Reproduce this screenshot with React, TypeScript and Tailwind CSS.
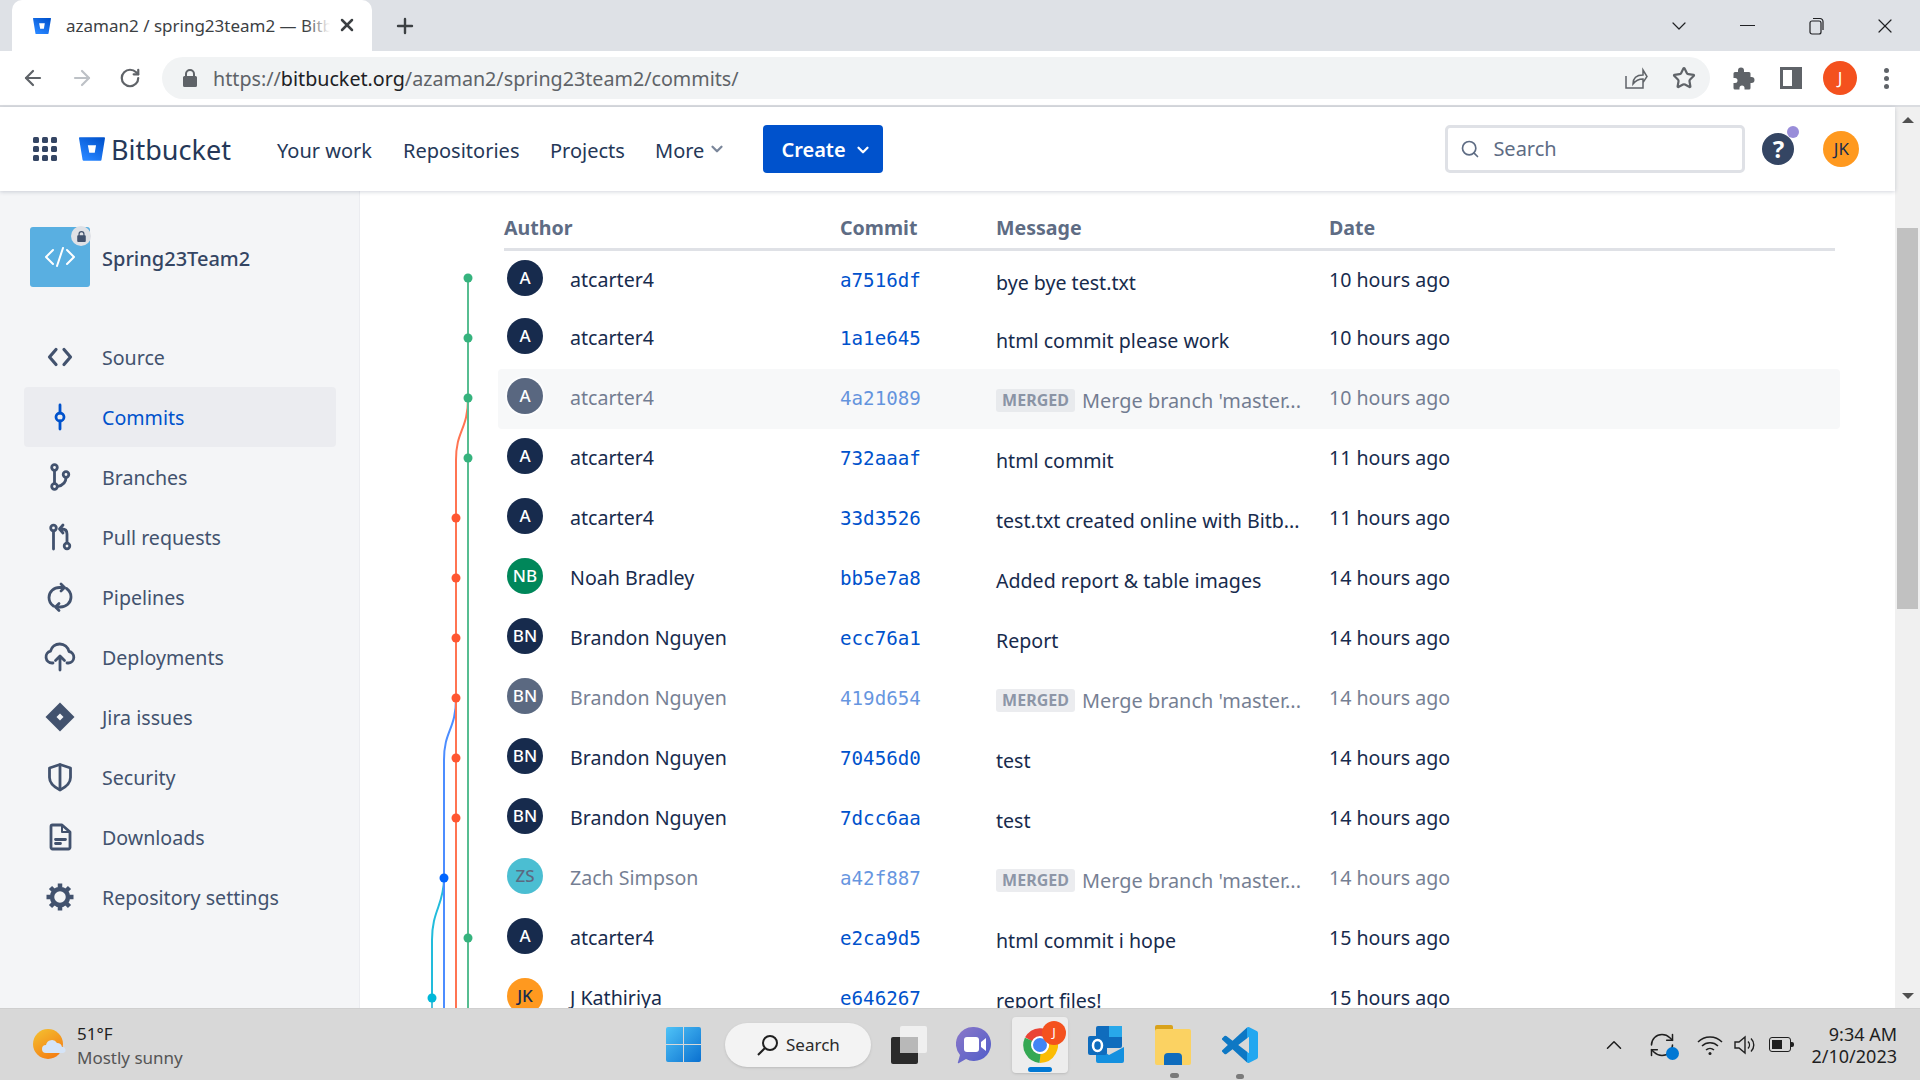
import { ArrowLeft, ArrowRight, ChevronDown, ChevronUp, Plus, RefreshCw, RotateCw, Search, Star, X } from 'lucide-react';
import type { ReactNode } from 'react';

const FONT = "font-['Noto_Sans','Open_Sans',sans-serif]";

interface Commit {
  author: string;
  initials: string;
  hash: string;
  message: string;
  date: string;
  merged?: boolean;
  hover?: boolean;
  avatar?: string;
}

const COMMITS: Commit[] = [
  { author: 'atcarter4', initials: 'A', hash: 'a7516df', message: 'bye bye test.txt', date: '10 hours ago' },
  { author: 'atcarter4', initials: 'A', hash: '1a1e645', message: 'html commit please work', date: '10 hours ago' },
  { author: 'atcarter4', initials: 'A', hash: '4a21089', message: "Merge branch 'master...", date: '10 hours ago', merged: true, hover: true },
  { author: 'atcarter4', initials: 'A', hash: '732aaaf', message: 'html commit', date: '11 hours ago' },
  { author: 'atcarter4', initials: 'A', hash: '33d3526', message: 'test.txt created online with Bitb...', date: '11 hours ago' },
  { author: 'Noah Bradley', initials: 'NB', hash: 'bb5e7a8', message: 'Added report & table images', date: '14 hours ago', avatar: 'bg-[#00875a] text-white' },
  { author: 'Brandon Nguyen', initials: 'BN', hash: 'ecc76a1', message: 'Report', date: '14 hours ago' },
  { author: 'Brandon Nguyen', initials: 'BN', hash: '419d654', message: "Merge branch 'master...", date: '14 hours ago', merged: true },
  { author: 'Brandon Nguyen', initials: 'BN', hash: '70456d0', message: 'test', date: '14 hours ago' },
  { author: 'Brandon Nguyen', initials: 'BN', hash: '7dcc6aa', message: 'test', date: '14 hours ago' },
  { author: 'Zach Simpson', initials: 'ZS', hash: 'a42f887', message: "Merge branch 'master...", date: '14 hours ago', merged: true, avatar: 'bg-[#00a3bf] text-[#172b4d]' },
  { author: 'atcarter4', initials: 'A', hash: 'e2ca9d5', message: 'html commit i hope', date: '15 hours ago' },
  { author: 'J Kathiriya', initials: 'JK', hash: 'e646267', message: 'report files!', date: '15 hours ago', avatar: 'bg-[#ff991f] text-[#172b4d]' },
];

function BitbucketLogo({ size, id }: { size: number; id: string }) {
  return (
    <svg width={size} height={size} viewBox="0 0 24 24">
      <defs>
        <linearGradient id={id} x1="1" y1="0.1" x2="0.4" y2="1">
          <stop offset="0" stopColor="#0052cc" />
          <stop offset="1" stopColor="#2684ff" />
        </linearGradient>
      </defs>
      <path
        fill={`url(#${id})`}
        d="M.778 1.213a.768.768 0 00-.768.892l3.263 19.81c.084.5.515.868 1.022.873H19.95a.772.772 0 00.77-.646l3.27-20.03a.768.768 0 00-.768-.891zM14.52 15.53H9.522L8.17 8.466h7.561z"
      />
    </svg>
  );
}

function SideIcon({ children }: { children: ReactNode }) {
  return (
    <svg width="32" height="32" viewBox="0 0 32 32" fill="none" stroke="currentColor" strokeWidth="2.8" strokeLinecap="round" strokeLinejoin="round">
      {children}
    </svg>
  );
}

const NAV_ITEMS: { label: string; icon: ReactNode; active?: boolean }[] = [
  { label: 'Source', icon: <SideIcon><path d="M12 8.5 5.5 16l6.5 7.5M20 8.5l6.5 7.5-6.5 7.5" strokeWidth="3.2" /></SideIcon> },
  { label: 'Commits', active: true, icon: <SideIcon><circle cx="16" cy="16" r="4" strokeWidth="2.8" /><path d="M16 4v8M16 20v8" /></SideIcon> },
  { label: 'Branches', icon: <SideIcon><circle cx="10.5" cy="6.5" r="2.8" /><circle cx="10.5" cy="25.5" r="2.8" /><circle cx="22" cy="13.5" r="2.8" /><path d="M10.5 9.5v13M22 16.5c0 5-3.5 8-8.5 9" /></SideIcon> },
  { label: 'Pull requests', icon: <SideIcon><circle cx="9.5" cy="7" r="2.8" /><circle cx="23" cy="25" r="2.8" /><path d="M9.5 10v18M23 22v-9c0-3-1.5-5-5-5h-2M19 4l-3.5 4 3.5 4" /></SideIcon> },
  { label: 'Pipelines', icon: <SideIcon><path d="M9.5 25C6.5 23 5 19.700 5 16.500 5 10.500 10 6.500 15.500 6.500H20M22.500 7.500c3 2 4.500 5 4.500 8.500 0 6-5 10-10.500 10H12" /><path d="M17 3l3.500 3.500L17 10M15 22.500 11.500 26l3.500 3.500" /></SideIcon> },
  { label: 'Deployments', icon: <SideIcon><path d="M9 22H8a6 6 0 0 1-1.500-11.800A9.500 9.500 0 0 1 25 10.500 5.800 5.800 0 0 1 24.500 22H23" /><path d="M16 29V15.500M11.500 19.500 16 15l4.500 4.500" /></SideIcon> },
  { label: 'Jira issues', icon: <svg width="32" height="32" viewBox="0 0 32 32"><path fill="currentColor" d="M16 1.500 30.500 16 16 30.500 1.500 16z" /><path fill="#f4f5f7" d="M16 12.500 19.500 16 16 19.500 12.500 16z" /></svg> },
  { label: 'Security', icon: <SideIcon><path d="M16 3.500 26.500 7v9.500c0 6-4.500 9.500-10.500 12.500-6-3-10.500-6.500-10.500-12.500V7z" /><path d="M16 4v24.500" /></SideIcon> },
  { label: 'Downloads', icon: <SideIcon><path d="M7 5.500A1.500 1.500 0 0 1 8.500 4H18l8 7v15.500a1.500 1.500 0 0 1-1.500 1.500h-16A1.500 1.500 0 0 1 7 26.500z" /><path d="M18 4v7h8" strokeWidth="2" /><path d="M11.500 18.500h10M11.500 22.500h5" /></SideIcon> },
  { label: 'Repository settings', icon: <SideIcon><circle cx="16" cy="16" r="8" strokeWidth="4.500" /><path strokeWidth="4.500" strokeLinecap="butt" d="M16 2.500v4M16 25.500v4M2.500 16h4M25.500 16h4M6.500 6.500l3 3M22.500 22.500l3 3M25.500 6.500l-3 3M9.500 22.500l-3 3" /></SideIcon> },
];

function TabStrip() {
  return (
    <div className="h-[51px] bg-[#dee1e6] flex items-center shrink-0">
      <div className="relative ml-[12px] w-[360px] h-[51px] bg-white rounded-t-[10px] flex items-center pl-[21px]">
        <BitbucketLogo size={18} id="fav" />
        <div className="relative ml-[15px] w-[264px] overflow-hidden whitespace-nowrap text-[17px] text-[#3c4043]">
          azaman2 / spring23team2 — Bitbucket
          <div className="absolute right-0 top-0 h-full w-[24px] bg-gradient-to-r from-transparent to-white" />
        </div>
        <X size={20} strokeWidth={3} className="text-[#3c4043] absolute left-[325px] top-[15px]" />
      </div>
      <Plus size={24} strokeWidth={2.4} className="ml-[21px] text-[#3c4043]" />
      <div className="flex-1" />
      <ChevronDown size={24} strokeWidth={1.2} className="text-[#202124] mr-[49px]" />
      <div className="w-[15px] h-[1.5px] bg-[#202124] mr-[54px]" />
      <svg width="16" height="18" viewBox="0 0 16 18" fill="none" stroke="#202124" strokeWidth="1.200" className="mr-[48px]">
        <rect x="1" y="4" width="11" height="13" rx="2" />
        <path d="M4 1.500h7a3 3 0 0 1 3 3V13" />
      </svg>
      <X size={24} strokeWidth={1.2} className="text-[#202124] mr-[23px]" />
    </div>
  );
}

function Toolbar() {
  return (
    <div className="h-[56px] bg-white border-b-2 border-[#dadce0] flex items-center shrink-0">
      <ArrowLeft size={24} strokeWidth={2.2} className="ml-[21px] text-[#5f6368]" />
      <ArrowRight size={24} strokeWidth={2.2} className="ml-[25px] text-[#bdc1c6]" />
      <RotateCw size={22} strokeWidth={2.4} className="ml-[25px] text-[#5f6368]" />
      <div className="ml-[21px] w-[1548px] h-[42px] rounded-full bg-[#f1f3f4] flex items-center">
        <svg width="14" height="18" viewBox="0 0 14 18" className="ml-[21px]">
          <path fill="#5f6368" d="M2 7V5a5 5 0 0 1 10 0v2h.5A1.500 1.500 0 0 1 14 8.500v8a1.500 1.500 0 0 1-1.500 1.500h-11A1.500 1.500 0 0 1 0 16.500v-8A1.500 1.500 0 0 1 1.500 7zm2 0h6V5a3 3 0 0 0-6 0z" />
        </svg>
        <span className="ml-[16px] pt-[2px] text-[19.7px] text-[#5f6368] whitespace-nowrap">
          https://<span className="text-[#202124]">bitbucket.org</span>/azaman2/spring23team2/commits/
        </span>
        <div className="flex-1" />
        <svg width="24" height="24" viewBox="0 0 24 24" fill="none" stroke="#5f6368" strokeWidth="1.500" className="mr-[24px]">
          <path d="M2 10v12h17v-5M9 18c0-6 4-9 10-9V4l4 6.500-4 6V13c-4 0-7 1-10 5z" />
        </svg>
        <Star size={24} strokeWidth={2.2} className="mr-[14px] text-[#5f6368]" />
      </div>
      <svg width="24" height="24" viewBox="0 0 24 24" className="ml-[22px]">
        <path fill="#5f6368" d="M9 1.500a3 3 0 0 1 3 3V6h5a1.500 1.500 0 0 1 1.500 1.500V11h1a3 3 0 0 1 0 6h-1v5a1.500 1.500 0 0 1-1.500 1.500h-4.500V22a2.500 2.500 0 0 0-5 0v1.500H3A1.500 1.500 0 0 1 1.500 22v-5H3a2.500 2.500 0 0 0 0-5H1.500V7.500A1.500 1.500 0 0 1 3 6h3V4.500a3 3 0 0 1 3-3z" />
      </svg>
      <div className="ml-[24px] w-[22px] h-[22px] border-[3px] border-[#5f6368] border-r-[10px]" />
      <div className="ml-[21px] w-[34px] h-[34px] rounded-full bg-[#f4511e] text-white text-[17px] flex items-center justify-center">J</div>
      <div className="ml-[27px] flex flex-col gap-[3px]">
        <div className="w-[5px] h-[5px] rounded-full bg-[#5f6368]" />
        <div className="w-[5px] h-[5px] rounded-full bg-[#5f6368]" />
        <div className="w-[5px] h-[5px] rounded-full bg-[#5f6368]" />
      </div>
    </div>
  );
}

function TopNav() {
  return (
    <header className="relative z-10 h-[84px] shrink-0 bg-white shadow-[0_1px_4px_rgba(9,30,66,0.18)] flex items-center text-[#253858]">
      <div className="ml-[33px] grid grid-cols-3 gap-[3px]">
        {Array.from({ length: 9 }).map((_, i) => (
          <div key={i} className="w-[6px] h-[6px] rounded-[1.5px] bg-[#344563]" />
        ))}
      </div>
      <div className="ml-[22px]"><BitbucketLogo size={26} id="logo" /></div>
      <span className="ml-[6px] text-[27px] text-[#253858] leading-none w-[135px]">Bitbucket</span>
      <span className="ml-[31px] pt-[3px] text-[20px] w-[126px]">Your work</span>
      <span className="pt-[3px] text-[20px] w-[147px]">Repositories</span>
      <span className="pt-[3px] text-[20px] w-[105px]">Projects</span>
      <span className="pt-[3px] text-[20px]">More</span>
      <ChevronDown size={18} strokeWidth={3} className="ml-[4px] text-[#7a869a]" />
      <div className="ml-[37px] w-[120px] h-[48px] pt-[2px] bg-[#0052cc] rounded-[4px] text-white text-[20px] font-semibold flex items-center pl-[18px] gap-[8px]">
        Create
        <ChevronDown size={18} strokeWidth={3} />
      </div>
      <div className="ml-[562px] w-[300px] h-[48px] border-[3px] border-[#dfe1e6] rounded-[5px] flex items-center pl-[12px] text-[#5e6c84]">
        <Search size={20} strokeWidth={2} />
        <span className="ml-[13px] text-[20px]">Search</span>
      </div>
      <div className="relative ml-[17px] w-[32px] h-[32px] rounded-full bg-[#344563] text-white text-[24px] font-bold flex items-center justify-center">
        ?
        <div className="absolute -right-[5px] -top-[7px] w-[12px] h-[12px] rounded-full bg-[#998dd9]" />
      </div>
      <div className="ml-[29px] w-[36px] h-[36px] rounded-full bg-[#ff991f] text-[#172b4d] text-[17px] flex items-center justify-center">JK</div>
    </header>
  );
}

function Sidebar() {
  return (
    <aside className="w-[360px] shrink-0 bg-[#f4f5f7] border-r border-[#ebecf0] pl-[24px] pr-[23px] overflow-hidden">
      <div className="flex items-center mt-[36px] pl-[6px] gap-[12px]">
        <div className="relative w-[60px] h-[60px] rounded-[3px] bg-[#59afe1] flex items-center justify-center">
          <svg width="32" height="20" viewBox="0 0 32 20" fill="none" stroke="white" strokeWidth="2" strokeLinecap="round" strokeLinejoin="round">
            <path d="M9 3 2 10l7 7M23 3l7 7-7 7M19 1l-6 18" />
          </svg>
          <div className="absolute -right-[1px] -top-[1px] w-[20px] h-[20px] rounded-full bg-[#dfe1e6] flex items-center justify-center">
            <svg width="9" height="11" viewBox="0 0 14 18">
              <path fill="#42526e" d="M2 7V5a5 5 0 0 1 10 0v2h.5A1.500 1.500 0 0 1 14 8.500v8a1.500 1.500 0 0 1-1.500 1.500h-11A1.500 1.500 0 0 1 0 16.500v-8A1.500 1.500 0 0 1 1.500 7zm2 0h6V5a3 3 0 0 0-6 0z" />
            </svg>
          </div>
        </div>
        <span className="pt-[3px] text-[20px] font-medium text-[#344563]">Spring23Team2</span>
      </div>
      <nav className="mt-[40px]">
        {NAV_ITEMS.map((item) => (
          <div
            key={item.label}
            className={`h-[60px] rounded-[4px] flex items-center pl-[20px] ${item.active ? 'bg-[#ebecf0] text-[#0052cc]' : 'text-[#42526e]'}`}
          >
            {item.icon}
            <span className="ml-[26px] pt-[2px] text-[19.6px]">{item.label}</span>
          </div>
        ))}
      </nav>
    </aside>
  );
}

function Graph() {
  return (
    <svg width="138" height="817" viewBox="360 191 138 817" fill="none" className="shrink-0">
      <path d="M432 1008V998" stroke="#4bc0dc" strokeWidth="2" />
      <path d="M444 878C444 905 432 910 432 940V998" stroke="#22bcdc" strokeWidth="2" />
      <path d="M456 698C456 730 444 730 444 760V1008" stroke="#4c8dff" strokeWidth="2" />
      <path d="M468 398C468 430 456 430 456 460V1008" stroke="#ff7452" strokeWidth="2" />
      <path d="M468 278V1008" stroke="#57bd91" strokeWidth="2" />
      {[0, 1, 2, 3, 11].map((n) => (
        <circle key={n} cx="468" cy={278 + n * 60} r="4.500" fill="#36b37e" />
      ))}
      {[4, 5, 6, 7, 8, 9].map((n) => (
        <circle key={n} cx="456" cy={278 + n * 60} r="4.500" fill="#ff5630" />
      ))}
      <circle cx="444" cy="878" r="4.500" fill="#0065ff" />
      <circle cx="432" cy="998" r="4.500" fill="#00b8d9" />
    </svg>
  );
}

function CommitRow({ commit, first }: { commit: Commit; first: boolean }) {
  const dim = commit.merged ? 'opacity-60' : '';
  return (
    <div className={`flex items-center pl-[6px] rounded-[4px] ${first ? 'h-[58px] pt-[2px]' : 'h-[60px]'} ${commit.hover ? 'bg-[#f7f8f9]' : ''}`}>
      <div className="w-[336px] flex items-center">
        <div className={`ml-[3px] -mt-[6px] w-[36px] h-[36px] rounded-full flex items-center justify-center text-[17px] font-medium ${commit.avatar ?? 'bg-[#172b4d] text-white'} ${commit.merged ? 'opacity-70' : ''} ${commit.hover ? 'ring-2 ring-white' : ''}`}>
          {commit.initials}
        </div>
        <span className={`ml-[27px] -mt-[2px] text-[19.6px] text-[#172b4d] ${dim}`}>{commit.author}</span>
      </div>
      <span className={`w-[156px] font-['DejaVu_Sans_Mono',monospace] text-[19.2px] text-[#0052cc] ${dim}`}>{commit.hash}</span>
      <div className="w-[333px] pt-[3px] flex items-center text-[19.6px] text-[#172b4d] whitespace-nowrap">
        {commit.merged && (
          <span className={`mr-[7px] h-[23px] w-[79px] rounded-[3px] bg-[#dfe1e6] text-[#42526e] text-[16px] font-bold flex items-center justify-center ${dim}`}>MERGED</span>
        )}
        <span className={`${dim} ${commit.merged ? 'text-[19.9px]' : ''}`}>{commit.message}</span>
      </div>
      <span className={`-mt-[2px] text-[19.6px] text-[#172b4d] ${dim}`}>{commit.date}</span>
    </div>
  );
}

function CommitTable() {
  return (
    <div className="w-[1342px] shrink-0">
      <div className="ml-[6px] w-[1331px] h-[60px] pt-[16px] border-b-[3px] border-[#dfe1e6] flex items-center text-[19.6px] font-bold text-[#5e6c84]">
        <span className="w-[336px]">Author</span>
        <span className="w-[156px]">Commit</span>
        <span className="w-[333px]">Message</span>
        <span>Date</span>
      </div>
      {COMMITS.map((commit, i) => (
        <CommitRow key={commit.hash} commit={commit} first={i === 0} />
      ))}
    </div>
  );
}

function Scrollbar() {
  return (
    <div className="w-[25px] shrink-0 bg-[#f0f0f0] flex flex-col items-center">
      <div className="mt-[10px] w-0 h-0 border-x-[6px] border-x-transparent border-b-[6px] border-b-[#505050]" />
      <div className="mt-[105px] w-[21px] h-[381px] bg-[#c1c1c1]" />
      <div className="mt-[384px] w-0 h-0 border-x-[6px] border-x-transparent border-t-[6px] border-t-[#505050]" />
    </div>
  );
}

function ChromeIcon() {
  return (
    <svg width="36" height="36" viewBox="0 0 36 36" fill="none" strokeWidth="9">
      <path d="M7 12.500A13.500 13.500 0 0 1 29.500 11" stroke="#ea4335" />
      <path d="M29.500 11A13.500 13.500 0 0 1 18 31.500" stroke="#fbbc04" />
      <path d="M18 31.500A13.500 13.500 0 0 1 7 12.500" stroke="#34a853" />
      <circle cx="18" cy="18" r="8" fill="#4285f4" stroke="white" strokeWidth="2" />
    </svg>
  );
}

function Taskbar() {
  return (
    <footer className="h-[72px] shrink-0 bg-[#d8d8d8] border-t border-[#cfcfcf] flex items-center relative z-20">
      <svg width="34" height="32" viewBox="0 0 34 32" className="ml-[33px]">
        <defs>
          <linearGradient id="sun" x1="0.2" y1="0" x2="0.8" y2="1">
            <stop offset="0" stopColor="#f4bd2f" />
            <stop offset="1" stopColor="#f47a11" />
          </linearGradient>
        </defs>
        <circle cx="15" cy="15" r="15" fill="url(#sun)" />
        <path fill="#d5e4f7" d="M13 24a4 4 0 0 1 0-8 6 6 0 0 1 11-2 5 5 0 0 1 5 4 3 3 0 0 1 1 6z" />
      </svg>
      <div className="ml-[10px] pt-[2px] w-[200px]">
        <div className="text-[17px] text-[#1f1f1f] leading-[24px]">51°F</div>
        <div className="text-[17px] text-[#555555] leading-[24px]">Mostly sunny</div>
      </div>
      <svg width="35" height="35" viewBox="0 0 35 35" className="ml-[389px]">
        <defs>
          <linearGradient id="win" x1="0" y1="0" x2="1" y2="1">
            <stop offset="0" stopColor="#4fc3f7" />
            <stop offset="1" stopColor="#0a70d0" />
          </linearGradient>
        </defs>
        <path fill="url(#win)" d="M0 2a2 2 0 0 1 2-2h15v17H0zM18 0h15a2 2 0 0 1 2 2v15H18zM0 18h17v17H2a2 2 0 0 1-2-2zM18 18h17v15a2 2 0 0 1-2 2H18z" />
      </svg>
      <div className="ml-[24px] w-[146px] h-[44px] rounded-full bg-[#f3f3f3] shadow-sm flex items-center pl-[32px] text-[17px] text-[#2b2b2b] gap-[7px]">
        <svg width="22" height="22" viewBox="0 0 22 22" fill="none" stroke="#1f1f1f" strokeWidth="2" className="-scale-x-100">
          <circle cx="9" cy="9" r="7" />
          <path d="m14 14 7 7" />
        </svg>
        Search
      </div>
      <div className="relative ml-[20px] w-[36px] h-[38px]">
        <div className="absolute left-[9px] top-0 w-[27px] h-[27px] bg-[#f0f0f0] rounded-[2px]" />
        <div className="absolute left-0 top-[11px] w-[27px] h-[27px] bg-[#2b2b2b] rounded-[2px]" />
        <div className="absolute left-[9px] top-[11px] w-[18px] h-[16px] bg-[#b8b8b8]" />
      </div>
      <svg width="36" height="38" viewBox="0 0 36 38" className="ml-[29px]">
        <defs>
          <linearGradient id="chat" x1="0" y1="0" x2="1" y2="1">
            <stop offset="0" stopColor="#8b78c9" />
            <stop offset="1" stopColor="#4f5cc9" />
          </linearGradient>
        </defs>
        <path fill="url(#chat)" d="M18 1a17 17 0 1 1-8 32l-7 4c-1 .500-1.500 0-1-1l2-7A17 17 0 0 1 18 1z" />
        <rect x="8" y="11" width="15" height="15" rx="3" fill="white" />
        <path fill="white" d="M25 16l5-4v13l-5-4z" />
      </svg>
      <div className="relative ml-[20px] w-[56px] h-[56px] bg-[#ededed] rounded-[4px] shadow-sm flex items-center justify-center">
        <ChromeIcon />
        <div className="absolute right-[2px] top-[4px] w-[24px] h-[24px] rounded-full bg-[#f4511e] text-white text-[13px] flex items-center justify-center">J</div>
        <div className="absolute left-[16px] bottom-[1px] w-[24px] h-[5px] rounded-full bg-[#0078d4]" />
      </div>
      <svg width="36" height="40" viewBox="0 0 36 40" className="ml-[20px]">
        <rect x="8" y="1" width="26" height="22" rx="2" fill="#0f6cbd" />
        <rect x="21" y="1" width="13" height="11" fill="#28a8ea" />
        <path fill="#1490df" d="M8 22l13 8 15-8v14a2 2 0 0 1-2 2H10a2 2 0 0 1-2-2z" />
        <rect x="0" y="11" width="19" height="19" rx="2" fill="#0f6cbd" />
        <ellipse cx="9.500" cy="20.500" rx="4.500" ry="5.500" fill="none" stroke="white" strokeWidth="2.500" />
      </svg>
      <div className="relative ml-[31px] w-[36px] h-[40px]">
        <div className="absolute left-0 top-0 w-[18px] h-[8px] bg-[#d9a21b] rounded-t-[2px]" />
        <div className="absolute left-0 top-[4px] w-[36px] h-[36px] bg-[#fbd262] rounded-[2px]" />
        <div className="absolute left-[9px] bottom-0 w-[18px] h-[12px] bg-[#0f6cbd] rounded-t-[4px]" />
        <div className="absolute left-[15px] -bottom-[13px] w-[9px] h-[5px] rounded-full bg-[#7a7a7a]" />
      </div>
      <div className="relative ml-[31px] w-[36px] h-[36px]">
        <svg width="36" height="36" viewBox="0 0 24 24">
          <defs>
            <linearGradient id="vsc" x1="0" y1="0" x2="1" y2="0">
              <stop offset="0.7" stopColor="#0e78c4" />
              <stop offset="0.7" stopColor="#22a7f0" />
            </linearGradient>
          </defs>
          <path fill="url(#vsc)" d="M23.150 2.587L18.210.21a1.494 1.494 0 0 0-1.705.29l-9.460 8.630-4.120-3.128a.999.999 0 0 0-1.276.057L.327 7.261A1 1 0 0 0 .326 8.740L3.899 12 .326 15.260a1 1 0 0 0 .001 1.479L1.650 17.940a.999.999 0 0 0 1.276.057l4.120-3.128 9.460 8.630a1.492 1.492 0 0 0 1.704.29l4.942-2.377A1.500 1.500 0 0 0 24 20.060V3.939a1.500 1.500 0 0 0-.850-1.352zm-5.146 14.861L10.826 12l7.178-5.448v10.896z" />
        </svg>
        <div className="absolute left-[14px] -bottom-[16px] w-[8px] h-[5px] rounded-full bg-[#7a7a7a]" />
      </div>
      <ChevronUp size={26} strokeWidth={1.4} className="ml-[343px] text-[#1f1f1f]" />
      <div className="relative ml-[21px] w-[28px] h-[28px]">
        <RefreshCw size={28} strokeWidth={1.3} className="text-[#1f1f1f]" />
        <div className="absolute right-[-3px] bottom-[-1px] w-[13px] h-[13px] rounded-full bg-[#0078d4]" />
      </div>
      <svg width="26" height="22" viewBox="0 0 26 22" fill="none" stroke="#1f1f1f" strokeWidth="1.500" className="ml-[21px]">
        <path d="M1 8a17 17 0 0 1 24 0M5 12a11.500 11.500 0 0 1 16 0M9 16a6 6 0 0 1 8 0" />
        <circle cx="13" cy="19.500" r="1.500" fill="#1f1f1f" stroke="none" />
      </svg>
      <svg width="24" height="22" viewBox="0 0 24 22" fill="none" stroke="#1f1f1f" strokeWidth="1.400" className="ml-[11px]">
        <path d="M1 8v6h4l6 5V3L5 8z" />
        <path d="M14 7.500a5 5 0 0 1 0 7M17 4.500a9 9 0 0 1 0 13" />
      </svg>
      <div className="ml-[11px] w-[22px] h-[15px] border-[1.5px] border-[#1f1f1f] rounded-[3px] p-[2px] flex">
        <div className="w-[10px] bg-[#1f1f1f]" />
      </div>
      <div className="w-[3px] h-[5px] bg-[#1f1f1f] rounded-r-[2px]" />
      <div className="ml-auto mr-[23px] text-right text-[18px] leading-[22px] text-[#1f1f1f]">
        <div>9:34 AM</div>
        <div>2/10/2023</div>
      </div>
    </footer>
  );
}

export default function App() {
  return (
    <div className={`w-[1920px] h-[1080px] overflow-hidden flex flex-col bg-white ${FONT}`}>
      <TabStrip />
      <Toolbar />
      <div className="flex-1 flex min-h-0">
        <div className="flex-1 flex flex-col min-w-0">
          <TopNav />
          <div className="flex-1 flex min-h-0 overflow-hidden">
            <Sidebar />
            <Graph />
            <CommitTable />
          </div>
        </div>
        <Scrollbar />
      </div>
      <Taskbar />
    </div>
  );
}
